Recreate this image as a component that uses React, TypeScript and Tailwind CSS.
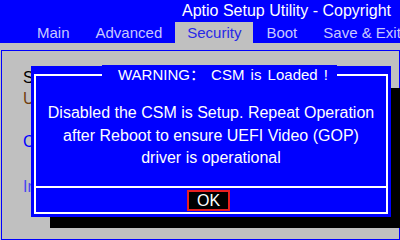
import React from "react"

const TABS = ["Main", "Advanced", "Security", "Boot", "Save & Exit"]
const ACTIVE_TAB = "Security"

const MESSAGE = [
  "Disabled the CSM is Setup. Repeat Operation",
  "after Reboot to ensure UEFI Video (GOP)",
  "driver is operational",
]

const FONT = { fontFamily: '"Liberation Sans", "Noto Sans CJK SC", sans-serif' }

export default function App() {
  return (
    <div
      className="relative flex h-[240px] w-[400px] flex-col overflow-hidden bg-[#c0c0c0]"
      style={FONT}
    >
      {/* Header: title + tabs */}
      <div className="flex flex-col bg-[#0000ff]">
        <div className="h-[22px] whitespace-nowrap pl-[182px] text-[16px] leading-[22px] text-white">
          Aptio Setup Utility - Copyright
        </div>
        <div className="flex h-[21px] whitespace-nowrap pl-[24px] text-[15px] leading-[21px]">
          {TABS.map(tab => (
            <div
              key={tab}
              className={
                tab === ACTIVE_TAB ?
                  "bg-[#c0c0c0] px-[12px] text-[#2828e8]"
                : "px-[13px] text-[#c8c8ff]"
              }
            >
              {tab}
            </div>
          ))}
        </div>
      </div>

      {/* Main panel behind the dialog */}
      <div className="ml-[1px] mt-[7px] flex-1 border border-[#0000ff] pl-[21px] pt-[16px] text-[16px] leading-[21px]">
        <div className="whitespace-nowrap text-black">S</div>
        <div className="whitespace-nowrap text-[#704010]">U</div>
        <div className="mt-[22px] whitespace-nowrap text-[#0000ff]">C</div>
        <div className="mt-[24px] whitespace-nowrap text-[#4848f0]">Ir</div>
      </div>

      {/* Shadow */}
      <div className="absolute left-[50px] top-[88px] h-[140px] w-[360px] bg-black" />

      {/* Warning dialog */}
      <div className="absolute left-[31px] top-[66px] w-[360px] bg-[#0000ff] px-[3px] pb-[3px] pt-[8px] text-white">
        <div className="relative flex h-[140px] flex-col border-2 border-white">
          <div className="absolute -top-[11px] left-[66px] whitespace-nowrap bg-[#0000ff] pl-[16px] pr-[9px] text-[15px] leading-[20px] [word-spacing:2px]">
            WARNING： CSM is Loaded !
          </div>
          <div className="flex-1 pt-[26px] text-center text-[16px] leading-[22.5px]">
            {MESSAGE.map(line => (
              <div key={line} className="whitespace-nowrap">
                {line}
              </div>
            ))}
          </div>
          <div className="flex h-[26px] items-center border-t-2 border-white pl-[151px]">
            <div className="border-2 border-[#e82020] bg-black px-[8px] text-[16px] leading-[17px] text-white">
              OK
            </div>
          </div>
        </div>
      </div>
    </div>
  )
}
